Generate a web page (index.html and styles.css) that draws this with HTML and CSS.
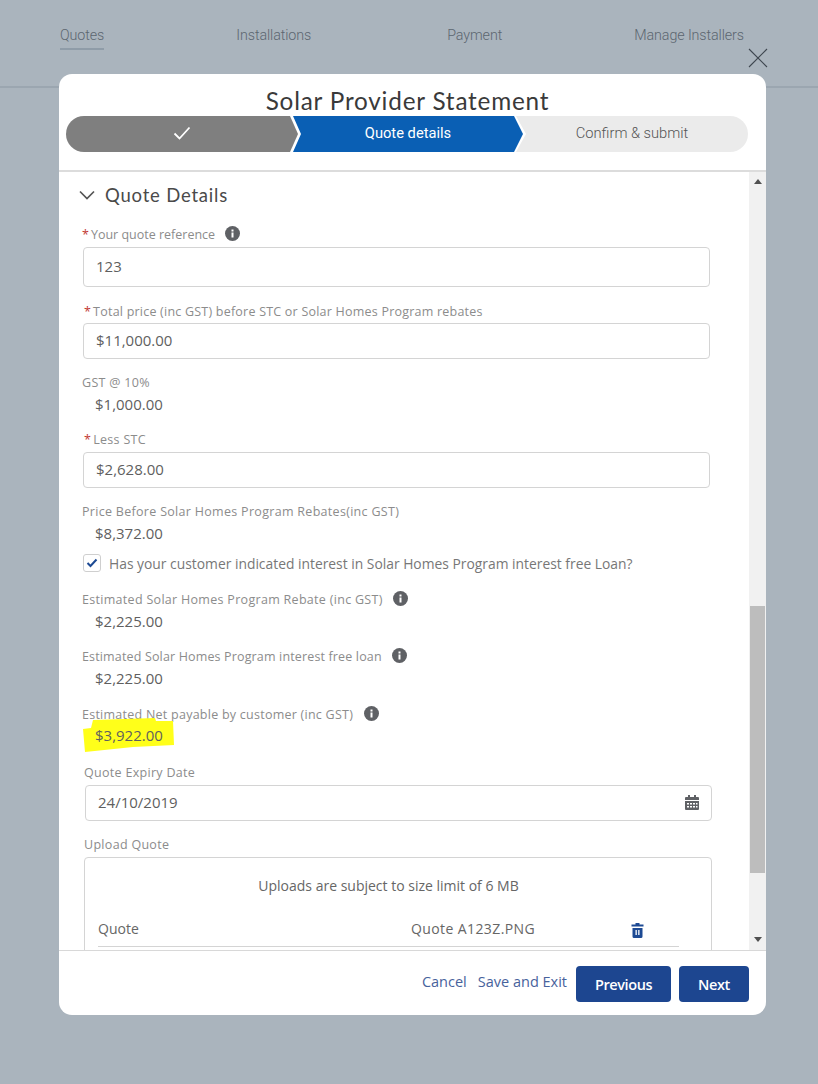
FILE: index.html
```html
<!DOCTYPE html>
<html lang="en">
<head>
<meta charset="utf-8">
<title>Solar Provider Statement</title>
<link rel="stylesheet" href="styles.css">
</head>
<body>
<header class="topnav">
  <div class="tab tab-active">Quotes</div>
  <div class="tab">Installations</div>
  <div class="tab tab-payment">Payment</div>
  <div class="tab">Manage Installers</div>
</header>
<svg class="close" width="20" height="20" viewBox="0 0 20 20"><path d="M1 1L19 19M19 1L1 19" stroke="#3f4750" stroke-width="1.1" fill="none"/></svg>
<section class="modal">
  <h1 class="title">Solar Provider Statement</h1>
  <div class="steps">
    <div class="step step-done"><svg width="18" height="14" viewBox="0 0 18 14"><path d="M1.5 7.5L6.5 12.5L16.5 1.5" stroke="#fff" stroke-width="1.8" fill="none"/></svg></div>
    <div class="step step-current">Quote details</div>
    <div class="step step-next">Confirm &amp; submit</div>
  </div>
  <div class="scrollarea">
    <div class="content">
      <div class="section-head">
        <svg width="16" height="10" viewBox="0 0 16 10"><path d="M1 1.5L8 8.5L15 1.5" stroke="#555" stroke-width="1.7" fill="none"/></svg>
        <span>Quote Details</span>
      </div>
      <div class="label label-a"><i class="req">*</i>Your quote reference <svg class="info" width="15" height="15" viewBox="0 0 15 15"><circle cx="7.5" cy="7.5" r="7.5" fill="#5f6165"/><rect x="6.5" y="6.5" width="2" height="5" fill="#fff"/><rect x="6.5" y="3.5" width="2" height="2" fill="#fff"/></svg></div>
      <div class="input input-tall">123</div>
      <div class="label label-b"><i class="req req-b">*</i>Total price (inc GST) before STC or Solar Homes Program rebates</div>
      <div class="input input-b">$11,000.00</div>
      <div class="label label-c">GST @ 10%</div>
      <div class="value">$1,000.00</div>
      <div class="label label-d"><i class="req req-b">*</i>Less STC</div>
      <div class="input">$2,628.00</div>
      <div class="label label-c">Price Before Solar Homes Program Rebates(inc GST)</div>
      <div class="value">$8,372.00</div>
      <div class="check-row">
        <span class="checkbox"><svg width="12" height="10" viewBox="0 0 12 10"><path d="M1.5 5L4.5 8L10.5 1.5" stroke="#1d4a94" stroke-width="2" fill="none"/></svg></span>
        <span>Has your customer indicated interest in Solar Homes Program interest free Loan?</span>
      </div>
      <div class="label label-e">Estimated Solar Homes Program Rebate (inc GST) <svg class="info" width="15" height="15" viewBox="0 0 15 15"><circle cx="7.5" cy="7.5" r="7.5" fill="#5f6165"/><rect x="6.5" y="6.5" width="2" height="5" fill="#fff"/><rect x="6.5" y="3.5" width="2" height="2" fill="#fff"/></svg></div>
      <div class="value value-b">$2,225.00</div>
      <div class="label label-f">Estimated Solar Homes Program interest free loan <svg class="info" width="15" height="15" viewBox="0 0 15 15"><circle cx="7.5" cy="7.5" r="7.5" fill="#5f6165"/><rect x="6.5" y="6.5" width="2" height="5" fill="#fff"/><rect x="6.5" y="3.5" width="2" height="2" fill="#fff"/></svg></div>
      <div class="value value-b">$2,225.00</div>
      <div class="label label-n">Estimated Net payable by customer (inc GST) <svg class="info" width="15" height="15" viewBox="0 0 15 15"><circle cx="7.5" cy="7.5" r="7.5" fill="#5f6165"/><rect x="6.5" y="6.5" width="2" height="5" fill="#fff"/><rect x="6.5" y="3.5" width="2" height="2" fill="#fff"/></svg></div>
      <div class="value value-b value-marked">
        <svg class="marker" width="92" height="34" viewBox="0 0 92 34"><path d="M10 2L72 0L73 3L90 3L91 27L50 29L2 34L0 11L8 10Z" fill="#ffff1a"/></svg>
        <span class="value-text">$3,922.00</span>
      </div>
      <div class="shifted">
        <div class="label label-g">Quote Expiry Date</div>
        <div class="input input-date">
          <span>24/10/2019</span>
          <svg width="14" height="15" viewBox="0 0 14 15"><path fill="#5f6165" d="M3 0h2v2h4V0h2v2h2a1 1 0 0 1 1 1v2H0V3a1 1 0 0 1 1-1h2zM0 6h14v8a1 1 0 0 1-1 1H1a1 1 0 0 1-1-1z"/><path fill="#fff" d="M2 8h2v1.500H2zM5 8h2v1.500H5zM8 8h2v1.500H8zM11 8h1.500v1.500H11zM2 11h2v1.500H2zM5 11h2v1.500H5zM8 11h2v1.500H8zM11 11h1.500v1.500H11z"/></svg>
        </div>
        <div class="label label-h">Upload Quote</div>
        <div class="upload">
          <div class="upload-note">Uploads are subject to size limit of 6 MB</div>
          <div class="upload-row">
            <span class="upload-name">Quote</span>
            <span class="upload-file">Quote A123Z.PNG</span>
            <svg class="trash" width="13" height="15" viewBox="0 0 13 15"><path fill="#1d4a94" d="M4.500 0h4v1.500h4V3.500H.5V1.500h4zM1.500 5h10v8.500a1.500 1.500 0 0 1-1.500 1.500H3a1.500 1.500 0 0 1-1.500-1.500z"/><path fill="#fff" d="M4.500 7h1.300v5H4.500zM7.200 7h1.300v5H7.200z"/></svg>
          </div>
        </div>
      </div>
    </div>
    <div class="scrollbar">
      <span class="arrow arrow-up"></span>
      <div class="thumb"></div>
      <span class="arrow arrow-down"></span>
    </div>
  </div>
  <footer class="footer">
    <a class="link">Cancel</a>
    <a class="link link-save">Save and Exit</a>
    <button class="btn btn-prev">Previous</button>
    <button class="btn btn-next">Next</button>
  </footer>
</section>
</body>
</html>
```
FILE: styles.css
```css
* { box-sizing: border-box; }
html, body { margin: 0; padding: 0; }
body {
  width: 818px;
  height: 1084px;
  overflow: hidden;
  background: #aab4bd;
  font-family: "Open Sans", "Noto Sans", sans-serif;
  position: relative;
}
.topnav {
  height: 88px;
  border-bottom: 2px solid #9ba6b0;
  display: flex;
  justify-content: space-between;
  align-items: flex-start;
  padding: 26px 74px 0 60px;
}
.tab {
  font-family: "Roboto", sans-serif;
  font-weight: 300;
  font-size: 14.300px;
  line-height: 18px;
  color: #5c6670;
  letter-spacing: -0.1px;
  padding-bottom: 4px;
}
.tab-active { border-bottom: 2px solid #8f9ca8; }
.tab-payment { margin-left: 4px; }
.close { position: absolute; left: 748px; top: 48px; }
.modal {
  position: absolute;
  left: 59px;
  top: 74px;
  width: 707px;
  height: 941px;
  background: #fff;
  border-radius: 13px;
  display: flex;
  flex-direction: column;
  overflow: hidden;
}
.title {
  margin: 12px 0 0;
  height: 30px;
  padding-right: 10px;
  font-family: "Lato", sans-serif;
  font-weight: 400;
  font-size: 24.300px;
  line-height: 29px;
  letter-spacing: 0.8px;
  text-align: center;
  color: #3a3a3a;
}
.steps {
  margin-left: 7px;
  width: 682px;
  height: 36px;
  display: flex;
  border-radius: 18px;
  overflow: hidden;
  background: #fff;
}
.step {
  height: 36px;
  display: flex;
  align-items: center;
  justify-content: center;
  font-family: "Roboto", sans-serif;
  font-size: 14.700px;
  padding-bottom: 2px;
  flex: none;
}
.step-done {
  width: 232px;
  background: #7f7f7f;
  clip-path: polygon(0 0, 224px 0, 232px 50%, 224px 100%, 0 100%);
}
.step-current {
  width: 230px;
  margin-left: -5px;
  background: #0a5fb4;
  color: #fff;
  clip-path: polygon(0 0, 221px 0, 230px 50%, 221px 100%, 0 100%, 8px 50%);
}
.step-next {
  width: 232px;
  margin-left: -7px;
  background: #ebebeb;
  color: #555;
  font-weight: 300;
  clip-path: polygon(0 0, 100% 0, 100% 100%, 0 100%, 10px 50%);
}
.scrollarea {
  margin-top: 18px;
  height: 781px;
  border-top: 2px solid #dcdcdc;
  border-bottom: 1px solid #d8d8d8;
  display: flex;
  overflow: hidden;
}
.content {
  width: 690px;
  flex: none;
  overflow: hidden;
  padding: 0 0 0 23px;
  color: #555;
}
.section-head {
  height: 45px;
  display: flex;
  align-items: center;
  margin-left: -3px;
  padding-top: 1px;
  gap: 10px;
  font-family: "Lato", sans-serif;
  font-size: 18.500px;
  letter-spacing: 0.8px;
  color: #4a4a4a;
}
.label {
  font-size: 12.500px;
  letter-spacing: 0.3px;
  line-height: 16px;
  color: #8c8c8c;
  height: 16px;
  white-space: nowrap;
}
.label-a { margin-top: 9px; letter-spacing: 0; }
.label-b { margin-top: 17px; letter-spacing: 0.22px; }
.label-c { margin-top: 16px; }
.label-d { margin-top: 18px; }
.label-e { margin-top: 19px; }
.label-f { margin-top: 17px; letter-spacing: 0.15px; }
.label-n { margin-top: 18px; letter-spacing: 0.25px; }
.label-g { margin-top: 19px; }
.label-h { margin-top: 16px; }
.req { color: #c23934; font-style: normal; margin-right: 2px; }
.req-b { margin-left: 2px; }
.info { margin-left: 7px; vertical-align: -2px; }
.input {
  width: 627px;
  height: 36px;
  margin-top: 4px;
  margin-left: 1px;
  border: 1px solid #d4d4d4;
  border-radius: 4px;
  background: #fff;
  display: flex;
  align-items: center;
  justify-content: space-between;
  padding: 0 12px 2px 12px;
  font-size: 15px;
  color: #5f5f5f;
}
.input-tall { height: 40px; margin-top: 5px; }
.input-b { margin-top: 3px; }
.value {
  font-size: 15px;
  line-height: 20px;
  height: 20px;
  margin-top: 3px;
  padding-left: 13px;
  color: #5f5f5f;
}
.value-b { margin-top: 4px; }
.value-marked { position: relative; }
.marker { position: absolute; left: 1px; top: -8px; }
.value-text { position: relative; top: -1px; }
.check-row {
  display: flex;
  align-items: center;
  gap: 8px;
  margin-top: 11px;
  margin-left: 1px;
  height: 18px;
  font-size: 13.850px;
  color: #777;
  white-space: nowrap;
}
.checkbox {
  width: 18px;
  height: 18px;
  flex: none;
  border: 1px solid #cfcfcf;
  border-radius: 3px;
  display: flex;
  align-items: center;
  justify-content: center;
}
.shifted { margin-left: 2px; }
.upload {
  width: 628px;
  height: 120px;
  margin-top: 4px;
  border: 1px solid #d4d4d4;
  border-radius: 4px;
  padding: 18px 32px 0 13px;
}
.upload-note {
  text-align: center;
  font-size: 14px;
  line-height: 20px;
  color: #666;
}
.upload-row {
  margin-top: 15px;
  height: 36px;
  display: flex;
  align-items: center;
  border-bottom: 1px solid #d4d4d4;
  font-size: 14px;
  color: #666;
}
.upload-name { width: 313px; }
.upload-file { width: 220px; letter-spacing: 0.4px; }
.trash { margin-top: 4px; }
.scrollbar {
  width: 17px;
  flex: none;
  background: #f1f1f1;
  display: flex;
  flex-direction: column;
  align-items: center;
  position: relative;
}
.thumb {
  width: 15px;
  height: 267px;
  margin-top: 422px;
  background: #bdbdbd;
}
.arrow {
  width: 0;
  height: 0;
  border-left: 4px solid transparent;
  border-right: 4px solid transparent;
}
.arrow-up { margin-top: 7px; border-bottom: 5px solid #505050; }
.arrow-down { margin-top: 64px; border-top: 5px solid #505050; }
.footer {
  flex: 1;
  display: flex;
  align-items: flex-start;
  padding: 15px 17px 0 0;
  justify-content: flex-end;
}
.link {
  color: #47629c;
  font-size: 14.500px;
  line-height: 36px;
  margin-top: -2px;
}
.link-save { margin-left: 11px; margin-right: 9px; }
.btn {
  height: 36px;
  border: 0;
  border-radius: 4px;
  background: #1d4690;
  color: #fff;
  font-family: "Open Sans", sans-serif;
  font-size: 14.500px;
  font-weight: 600;
  letter-spacing: -0.4px;
  padding: 0;
}
.btn-prev { width: 95px; }
.btn-next { width: 70px; margin-left: 8px; }
```
